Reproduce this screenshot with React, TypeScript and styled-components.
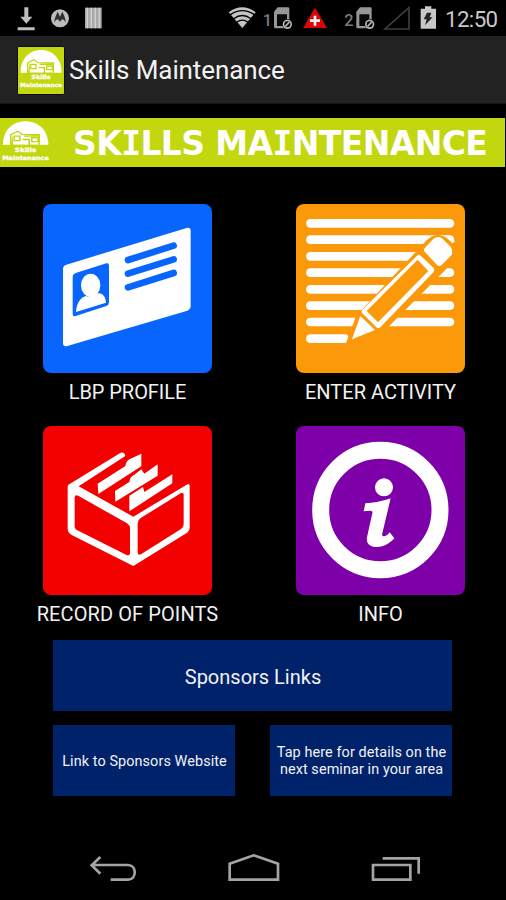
import React from "react";
import styled, { createGlobalStyle } from "styled-components";

const GlobalStyle = createGlobalStyle`
  body { margin: 0; background: #000; }
`;

const Screen = styled.div`
  width: 506px;
  height: 900px;
  display: flex;
  flex-direction: column;
  overflow: hidden;
  background: #000;
  color: #f2f2f2;
  font-family: Roboto, "Liberation Sans", sans-serif;
`;

const StatusBar = styled.div`
  height: 36px;
  flex: none;
  display: flex;
  justify-content: space-between;
`;

const StatusGroup = styled.div`
  display: flex;
  align-items: center;
`;

const Clock = styled.span`
  width: 61px;
  padding-top: 2px;
  font-size: 22.3px;
  line-height: 28px;
  letter-spacing: -0.6px;
  color: #c9c9c9;
`;

const TitleBar = styled.header`
  height: 68px;
  flex: none;
  display: flex;
  align-items: center;
  background: linear-gradient(#222 0, #222 64px, #282828 66px, #101010 68px);
  padding-left: 17px;
  box-sizing: border-box;
`;

const AppIcon = styled.div`
  display: flex;
  border: 1px solid #0b0820;
  border-radius: 4px;
`;

const Title = styled.h1`
  margin: 0 0 0 4px;
  font-size: 26px;
  font-weight: 400;
  line-height: 32px;
  letter-spacing: -0.1px;
  white-space: nowrap;
`;

const Banner = styled.div`
  width: 505px;
  height: 49px;
  flex: none;
  margin-top: 14px;
  display: flex;
  align-items: center;
  background: #c3d70e;
`;

const BannerText = styled.div`
  margin: 3px 0 0 22px;
  color: #fff;
  font: bold 33px/40px "DejaVu Sans", Verdana, sans-serif;
  white-space: nowrap;
  letter-spacing: -0.6px;
`;

const SerifI = styled.span`
  font-family: "DejaVu Sans Mono", monospace;
`;

const TileGrid = styled.main`
  display: grid;
  grid-template-columns: 253px 253px;
  grid-auto-rows: 222px;
  margin: 37px 0 0 1px;
`;

const Tile = styled.div`
  display: flex;
  flex-direction: column;
  align-items: center;
`;

const TileFace = styled.div<{ $color: string }>`
  width: 169px;
  height: 169px;
  border-radius: 8px;
  overflow: hidden;
  background: ${(p) => p.$color};
  svg { display: block; }
`;

const TileLabel = styled.div<{ $spacing: number }>`
  margin-top: 7px;
  font-size: 20px;
  line-height: 24px;
  letter-spacing: ${(p) => p.$spacing}px;
  white-space: nowrap;
`;

const Sponsors = styled.section`
  display: grid;
  grid-template-columns: 182px 182px;
  grid-template-rows: 71px 71px;
  column-gap: 35px;
  row-gap: 14px;
  margin: -8px 0 0 53px;
`;

const SponsorButton = styled.div<{ $wide?: boolean }>`
  grid-column: ${(p) => (p.$wide ? "span 2" : "auto")};
  display: flex;
  align-items: center;
  justify-content: center;
  padding: ${(p) => (p.$wide ? "3px 0 0 1px" : "1px 0 0 1px")};
  box-sizing: border-box;
  background: #00226a;
  text-align: center;
  white-space: nowrap;
  font-size: ${(p) => (p.$wide ? 20 : 14.4)}px;
  line-height: ${(p) => (p.$wide ? 24 : 17)}px;
  letter-spacing: ${(p) => (p.$wide ? 0 : 0.1)}px;
`;

const NavBar = styled.nav`
  height: 70px;
  margin-top: auto;
  display: flex;
  justify-content: center;
  padding-right: 0;
  svg { display: block; }
`;

const Logo = ({ width, height }: { width: number; height: number }) => (
  <svg width={width} height={height} viewBox="0 0 138 141" preserveAspectRatio="none">
    <rect width="138" height="141" rx="3" fill="#c3d70e" />
    <path d="M8 77C8 34 35 9 69 9s62 25 62 68h-20V49H35l-6 28z" fill="#fff" />
    <path d="M35 46h76v31H35z" fill="#fff" />
    <path d="M29 77V48l19-10 12 9 46 1v29M38 52h16v13H38zM61 62h18v16M86 57h17v11H86zM65 52h40" fill="none" stroke="#c3d70e" strokeWidth="4" />
    <path d="M32 77h36v9H32zM74 77h30v9H74z" fill="#c3d70e" />
    <g fill="#fff" stroke="#fff" strokeWidth="0.8" fontFamily="DejaVu Sans" fontWeight="bold" textAnchor="middle">
      <text x="69" y="97" fontSize="17" textLength="58" lengthAdjust="spacingAndGlyphs">Skills</text>
      <text x="69" y="121" fontSize="17" textLength="126" lengthAdjust="spacingAndGlyphs">Maintenance</text>
    </g>
  </svg>
);

const NotificationIcons = () => (
  <svg width="110" height="36" viewBox="0 0 330 108" fill="#bdbdbd">
    <path d="M73 22h12v28h12L79 71 61 50h12zM53 82h51v9H53z" />
    <circle cx="180" cy="55" r="27" />
    <path d="M162 69c2-14 6-25 11-34l7 15 7-15c5 9 9 20 11 34-4-8-8-11-12-11l-6 7-6-7c-4 0-8 3-12 11z" fill="#303030" />
    <path d="M255 23h50v62h-50z" fill="#a9a9a9" />
    <path d="M262 23v62M274 23v62M286 23v62M298 23v62" stroke="#d2d2d2" strokeWidth="4" />
  </svg>
);

const SimCard = ({ x }: { x: number }) => (
  <g transform={`translate(${x} 0)`}>
    <path d="M11 22h31q4 0 4 4v38L30 85H4q-4 0-4-4V35z" fill="#969696" />
    <path d="M9 43h30v13L27 65v13H9z" fill="#080808" />
    <circle cx="40" cy="73" r="15" fill="#000" />
    <circle cx="40" cy="73" r="11.5" fill="none" stroke="#b7b7b7" strokeWidth="5" />
    <path d="M34 79l12-13" stroke="#b7b7b7" strokeWidth="5" />
  </g>
);

const SystemIcons = () => (
  <svg width="225" height="36" viewBox="0 0 675 108" fontFamily="Roboto" fontWeight="500" fill="#7c7c7c">
    <path d="M26 37Q67 7 107 37L67 84z" fill="#c4c4c4" />
    <g fill="none" stroke="#000" strokeWidth="4">
      <path d="M31 44Q67 20 103 44" />
      <path d="M41 56Q67 37 93 56" />
      <path d="M50 67Q67 54 84 67" />
    </g>
    <text x="128" y="79" fontSize="49">1</text>
    <SimCard x={162} />
    <path d="M285 23l36 61h-72z" fill="#d60808" />
    <path d="M285 47v30M270 62h30" stroke="#eee" strokeWidth="8" />
    <text x="373" y="79" fontSize="49">2</text>
    <SimCard x={409} />
    <path d="M567 23v64h-72z" fill="none" stroke="#3d3d3d" strokeWidth="5" />
    <path d="M615 19h19v7h14v60h-46V26h13z" fill="#c8c8c8" />
    <path d="M621 38h13l-5 14h9l-23 24 5-18h-9z" fill="#222" />
  </svg>
);

const ProfileIcon = () => (
  <svg width="169" height="169" viewBox="38 26 507 507" fill="#fff">
    <path d="M108 208L469 98q12-3 12 9v225q0 10-10 14L111 452q-13 4-13-9V220q0-9 10-12z" />
    <path d="M136 233l92-29q8-2 8 7v110q0 8-8 11l-92 30q-9 3-9-6V245q0-9 9-12z" fill="#0866fe" />
    <ellipse cx="181" cy="270" rx="29" ry="35" />
    <path d="M137 350c2-29 14-43 30-48 15 7 26-9 39-8 13 1 20 12 21 28z" />
    <path d="M293 194l137-43M293 235l137-43M293 276l137-43" stroke="#0866fe" strokeWidth="20" strokeLinecap="round" />
  </svg>
);

const ActivityIcon = () => (
  <svg width="169" height="169" viewBox="33 26 507 507" fill="#fff">
    <g stroke="#fff" strokeWidth="26" strokeLinecap="round">
      <path d="M76 84H495M76 133H495M76 183H480M76 232H495M76 282H495M76 331H495M76 380H495M76 430H179" />
    </g>
    <path d="M181 449l32-87 212-227q29-28 60-8 29 20 26 57l-27 37-187 187-93 42z" fill="#fc990b" />
    <path d="M483 122q21-6 26 19-14 1-26-19z" />
    <path d="M420 157l24-25q13-12 27-3l26 25q6 8 4 24l-32 32q-7 5-13-1l-37-40q-5-6 1-12z" />
    <path d="M396 181q5-5 11 0l39 37q4 6-1 13L286 396q-6 5-12 0l-42-42q-5-5 0-11z" />
    <path d="M398 193l32 34-151 154-34-34z" fill="#fc990b" />
    <path d="M226 362l44 42-69 28z" />
  </svg>
);

const RecordIcon = () => (
  <svg width="169" height="169" viewBox="38 34 507 507" fill="#fff">
    <path d="M113 211L271 114q12-3 14 10L145 215l164 91 160-96q9-5 9 5v123q0 11-10 18l-159 98-185-93q-12-8-12-19V216z" />
    <path d="M133 249q0-12 12-5l145 82q9 6 9 15v74q0 11-12 5L141 347q-8-4-8-11zM460 241q0-10-9-5l-120 74q-9 6-9 16v86q0 12 11 6l119-75q8-5 8-14z" fill="#f30000" />
    <path d="M202 207l83-53q3-16 14-21l34-16v38L204 238z" />
    <path d="M254 229l44-28q-1-14 13-20l22-17 9 13 40-28v34L255 261z" />
    <path d="M297 243l41-26 4 15 84-53v27L297 290z" />
  </svg>
);

const InfoIcon = () => (
  <svg width="169" height="169" viewBox="33 34 507 507" fill="#fff">
    <circle cx="286" cy="286" r="179" fill="none" stroke="#fff" strokeWidth="51" />
    <circle cx="297" cy="218" r="27" />
    <path d="M241 266q37-1 76-15l-25 105q-2 9 4 9 9 0 18-12l14 18c-15 16-30 26-52 26-23 0-33-12-30-29l16-72q2-8-6-8l-20 2z" />
  </svg>
);

const NavIcons = () => (
  <svg width="386" height="70" viewBox="0 0 1158 210" fill="none" stroke="#a4a4a4" strokeWidth="8">
    <path d="M121 81L95 106l26 25M96 105h108c27 0 27 44 0 44h-52" />
    <path d="M509 149v-48l72-25 73 25v48z" />
    <path d="M939 105h112v44H939zM968 85h108v46" />
  </svg>
);

const tiles = [
  { label: "LBP PROFILE", color: "#0866fe", icon: <ProfileIcon />, spacing: -0.05 },
  { label: "ENTER ACTIVITY", color: "#fc990b", icon: <ActivityIcon />, spacing: 0 },
  { label: "RECORD OF POINTS", color: "#f30000", icon: <RecordIcon />, spacing: 0.1 },
  { label: "INFO", color: "#7d00a9", icon: <InfoIcon />, spacing: 0 },
];

export default function App() {
  return (
    <Screen>
      <GlobalStyle />
      <StatusBar>
        <StatusGroup><NotificationIcons /></StatusGroup>
        <StatusGroup><SystemIcons /><Clock>12:50</Clock></StatusGroup>
      </StatusBar>
      <TitleBar>
        <AppIcon><Logo width={46} height={47} /></AppIcon>
        <Title>Skills Maintenance</Title>
      </TitleBar>
      <Banner>
        <Logo width={51} height={49} />
        <BannerText>SK<SerifI>I</SerifI>LLS MA<SerifI>I</SerifI>NTENANCE</BannerText>
      </Banner>
      <TileGrid>
        {tiles.map((t) => (
          <Tile key={t.label}>
            <TileFace $color={t.color}>{t.icon}</TileFace>
            <TileLabel $spacing={t.spacing}>{t.label}</TileLabel>
          </Tile>
        ))}
      </TileGrid>
      <Sponsors>
        <SponsorButton $wide>Sponsors Links</SponsorButton>
        <SponsorButton>Link to Sponsors Website</SponsorButton>
        <SponsorButton>Tap here for details on the<br />next seminar in your area</SponsorButton>
      </Sponsors>
      <NavBar><NavIcons /></NavBar>
    </Screen>
  );
}
